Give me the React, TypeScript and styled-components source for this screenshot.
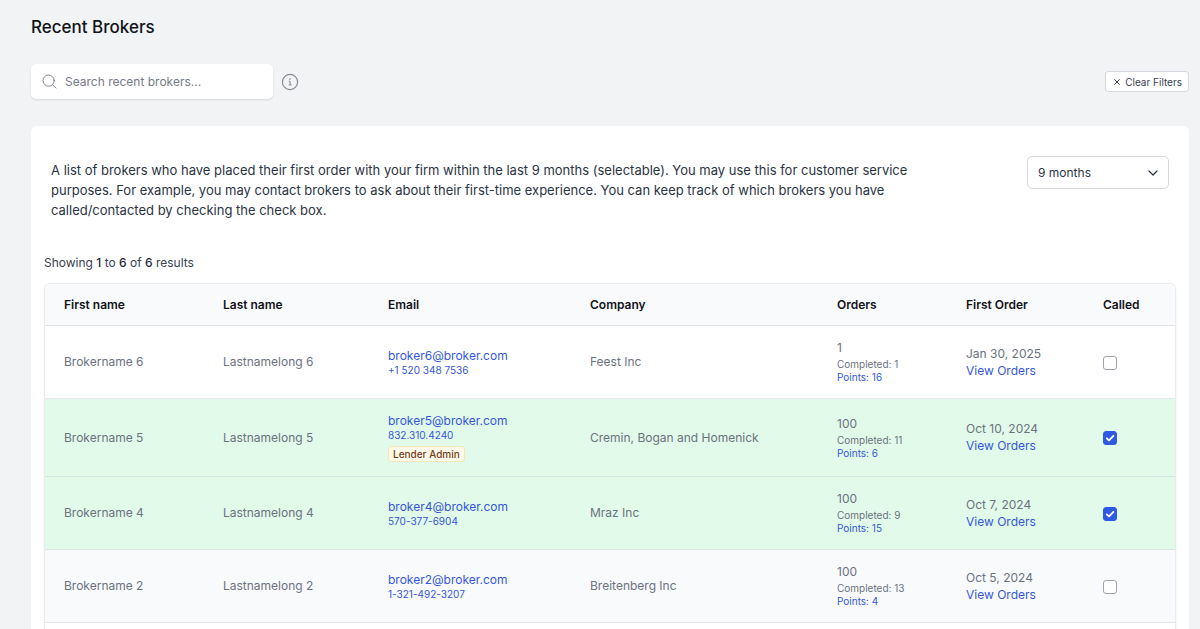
import React, { useState } from "react";
import styled, { createGlobalStyle } from "styled-components";

const GlobalStyle = createGlobalStyle`
  *, *::before, *::after { box-sizing: border-box; }
  body {
    margin: 0;
    background: #f2f3f5;
    color: #374151;
    font-family: Inter, "Liberation Sans", sans-serif;
    font-size: 12px;
    line-height: 17px;
  }
  button, input, select { font: inherit; color: inherit; }
`;

const Page = styled.main`
  display: flex;
  flex-direction: column;
  min-height: 100vh;
  padding: 16px 11px 0 31px;
`;

const Title = styled.h1`
  margin: 0;
  color: #111318;
  font-size: 17px;
  line-height: 22px;
  font-weight: 500;
`;

const Toolbar = styled.div`
  display: flex;
  align-items: center;
  gap: 8px;
  margin: 26px 0 27px;
`;

const SearchBox = styled.label`
  display: flex;
  align-items: center;
  gap: 8px;
  width: 242px;
  height: 35px;
  padding: 0 11px;
  border-radius: 5px;
  background: #fff;
  box-shadow: 0 1px 2px rgba(0, 0, 0, 0.12);
  color: #808591;
`;

const SearchInput = styled.input`
  flex: 1;
  min-width: 0;
  padding: 0;
  border: 0;
  outline: 0;
  background: transparent;
  color: #374151;
  &::placeholder { color: #757b87; opacity: 1; }
`;

const InfoButton = styled.button`
  display: flex;
  padding: 0;
  border: 0;
  background: none;
  color: #858a95;
`;

const ClearButton = styled.button`
  display: flex;
  align-items: center;
  gap: 5px;
  height: 21px;
  margin-left: auto;
  padding: 0 6px 0 8px;
  border: 1px solid #d5d8de;
  border-radius: 3px;
  background: #fff;
  color: #374151;
  font-size: 10px;
  line-height: 14px;
`;

const Card = styled.section`
  display: flex;
  flex: 1;
  flex-direction: column;
  padding: 30px 13px 0;
  border-radius: 6px 6px 0 0;
  background: #fff;
`;

const Intro = styled.div`
  display: flex;
  align-items: flex-start;
  gap: 88px;
  padding: 0 7px;
`;

const Description = styled.p`
  flex: 1;
  margin: 4px 0 0;
  color: #2b3443;
  font-size: 13px;
  line-height: 20px;
`;

const SelectBox = styled.div`
  display: grid;
  width: 142px;
  align-items: center;
  color: #2b3443;
  & > * { grid-area: 1 / 1; }
  & > svg { justify-self: end; margin-right: 11px; pointer-events: none; }
`;

const Select = styled.select`
  appearance: none;
  width: 100%;
  height: 33px;
  padding: 0 28px 0 10px;
  border: 1px solid #d5d8de;
  border-radius: 5px;
  background: #fff;
`;

const Summary = styled.p`
  margin: 34px 0 12px;
  strong { color: #1f2937; font-weight: 500; }
`;

const TableFrame = styled.div`
  flex: 1;
  overflow: hidden;
  border: 1px solid #e9ebee;
  border-bottom: 0;
  border-radius: 6px 6px 0 0;
  box-shadow: 0 1px 2px rgba(0, 0, 0, 0.08);
`;

const Table = styled.table`
  width: 100%;
  table-layout: fixed;
  border-collapse: separate;
  border-spacing: 0;
`;

const HeadCell = styled.th<{ $width?: number }>`
  width: ${(p) => (p.$width ? `${p.$width}px` : "auto")};
  height: 42px;
  padding: 0 0 0 9px;
  border-bottom: 1px solid #dfe2e7;
  background: #f9fafc;
  color: #111318;
  font-weight: 600;
  text-align: left;
  &:first-child { padding-left: 19px; }
`;

const Row = styled.tr<{ $called: boolean; $striped: boolean }>`
  background: ${(p) => (p.$called ? "#e2fae9" : p.$striped ? "#f9fafc" : "#fff")};
`;

const Cell = styled.td`
  padding: 13px 0 14px 9px;
  border-bottom: 1px solid rgba(200, 205, 220, 0.45);
  color: #6b7280;
  vertical-align: middle;
  &:first-child { padding-left: 19px; }
`;

const Link = styled.a`
  display: block;
  color: #3557dc;
  text-decoration: none;
`;

const SmallLink = styled(Link)`
  font-size: 10px;
  line-height: 13px;
`;

const Small = styled.div`
  margin-top: 2px;
  font-size: 10px;
  line-height: 13px;
`;

const Badge = styled.span`
  display: block;
  width: fit-content;
  margin-top: 4px;
  padding: 0 4px;
  border: 1px solid #f8e5b6;
  border-radius: 3px;
  background: #fffae9;
  color: #74401c;
  font-size: 10px;
  line-height: 14px;
  font-weight: 500;
`;

const CheckLabel = styled.label`
  display: inline-grid;
  place-items: center;
  vertical-align: middle;
  & > * { grid-area: 1 / 1; }
  & > svg { pointer-events: none; }
`;

const Checkbox = styled.input`
  appearance: none;
  width: 14px;
  height: 14px;
  margin: 0;
  border: 1px solid #9ea3ad;
  border-radius: 3px;
  background: #fff;
  &:checked { border-color: #2f58e3; background: #2f58e3; }
`;

interface Broker {
  id: number;
  email: string;
  phone: string;
  role?: string;
  company: string;
  orders: number;
  completed: number;
  points: number;
  firstOrder: string;
  called: boolean;
}

const initialBrokers: Broker[] = [
  { id: 6, email: "broker6@broker.com", phone: "+1 520 348 7536", company: "Feest Inc", orders: 1, completed: 1, points: 16, firstOrder: "Jan 30, 2025", called: false },
  { id: 5, email: "broker5@broker.com", phone: "832.310.4240", role: "Lender Admin", company: "Cremin, Bogan and Homenick", orders: 100, completed: 11, points: 6, firstOrder: "Oct 10, 2024", called: true },
  { id: 4, email: "broker4@broker.com", phone: "570-377-6904", company: "Mraz Inc", orders: 100, completed: 9, points: 15, firstOrder: "Oct 7, 2024", called: true },
  { id: 2, email: "broker2@broker.com", phone: "1-321-492-3207", company: "Breitenberg Inc", orders: 100, completed: 13, points: 4, firstOrder: "Oct 5, 2024", called: false },
];

const columns = [
  { label: "First name", width: 169 },
  { label: "Last name", width: 165 },
  { label: "Email", width: 202 },
  { label: "Company" },
  { label: "Orders", width: 129 },
  { label: "First Order", width: 137 },
  { label: "Called", width: 81 },
];

export default function App() {
  const [brokers, setBrokers] = useState(initialBrokers);
  const [query, setQuery] = useState("");

  const toggle = (id: number) =>
    setBrokers((list) => list.map((b) => (b.id === id ? { ...b, called: !b.called } : b)));

  return (
    <>
      <GlobalStyle />
      <Page>
        <Title>Recent Brokers</Title>
        <Toolbar>
          <SearchBox>
            <svg width="15" height="15" viewBox="0 0 15 15" fill="none" stroke="currentColor" strokeLinecap="round" aria-hidden="true">
              <circle cx="6.6" cy="6.6" r="5.6" />
              <path d="M10.7 10.7 14 14" />
            </svg>
            <SearchInput
              type="text"
              aria-label="Search recent brokers"
              placeholder="Search recent brokers..."
              value={query}
              onChange={(e) => setQuery(e.target.value)}
            />
          </SearchBox>
          <InfoButton type="button" aria-label="About recent brokers">
            <svg width="18" height="18" viewBox="0 0 18 18" fill="none" stroke="currentColor" strokeLinecap="round" strokeLinejoin="round" aria-hidden="true">
              <circle cx="9" cy="9" r="7.6" strokeWidth="1.2" />
              <path d="M8.1 8.2h1v3.6M8 11.9h2.2" />
              <circle cx="9" cy="6.1" r=".8" fill="currentColor" stroke="none" />
            </svg>
          </InfoButton>
          <ClearButton type="button" onClick={() => setQuery("")}>
            <svg width="6" height="6" viewBox="0 0 6 6" stroke="currentColor" strokeLinecap="round" aria-hidden="true">
              <path d="M.6.6 5.4 5.4M5.4.6.6 5.4" />
            </svg>
            Clear Filters
          </ClearButton>
        </Toolbar>

        <Card>
          <Intro>
            <Description>
              A list of brokers who have placed their first order with your firm within the last 9 months
              (selectable). You may use this for customer service purposes. For example, you may contact
              brokers to ask about their first-time experience. You can keep track of which brokers you
              have called/contacted by checking the check box.
            </Description>
            <SelectBox>
              <Select aria-label="Time period" defaultValue="9">
                <option value="3">3 months</option>
                <option value="6">6 months</option>
                <option value="9">9 months</option>
              </Select>
              <svg width="10" height="6" viewBox="0 0 10 6" fill="none" stroke="currentColor" strokeWidth="1.2" strokeLinecap="round" strokeLinejoin="round" aria-hidden="true">
                <path d="M1 1l4 4 4-4" />
              </svg>
            </SelectBox>
          </Intro>

          <Summary>
            Showing <strong>1</strong> to <strong>6</strong> of <strong>6</strong> results
          </Summary>

          <TableFrame>
            <Table>
              <thead>
                <tr>
                  {columns.map((c) => (
                    <HeadCell key={c.label} scope="col" $width={c.width}>{c.label}</HeadCell>
                  ))}
                </tr>
              </thead>
              <tbody>
                {brokers.map((b, i) => (
                  <Row key={b.id} $called={b.called} $striped={i % 2 === 1}>
                    <Cell>Brokername {b.id}</Cell>
                    <Cell>Lastnamelong {b.id}</Cell>
                    <Cell>
                      <Link href={`mailto:${b.email}`}>{b.email}</Link>
                      <SmallLink href={`tel:${b.phone}`}>{b.phone}</SmallLink>
                      {b.role && <Badge>{b.role}</Badge>}
                    </Cell>
                    <Cell>{b.company}</Cell>
                    <Cell>
                      {b.orders}
                      <Small>Completed: {b.completed}</Small>
                      <SmallLink href="#points">Points: {b.points}</SmallLink>
                    </Cell>
                    <Cell>
                      {b.firstOrder}
                      <Link href="#orders">View Orders</Link>
                    </Cell>
                    <Cell>
                      <CheckLabel>
                        <Checkbox
                          type="checkbox"
                          aria-label={`Called Brokername ${b.id}`}
                          checked={b.called}
                          onChange={() => toggle(b.id)}
                        />
                        {b.called && (
                          <svg width="10" height="10" viewBox="0 0 10 10" fill="none" stroke="#fff" strokeWidth="1.8" strokeLinecap="round" strokeLinejoin="round" aria-hidden="true">
                            <path d="M1.8 5.3 4 7.4 8.4 2.8" />
                          </svg>
                        )}
                      </CheckLabel>
                    </Cell>
                  </Row>
                ))}
              </tbody>
            </Table>
          </TableFrame>
        </Card>
      </Page>
    </>
  );
}
